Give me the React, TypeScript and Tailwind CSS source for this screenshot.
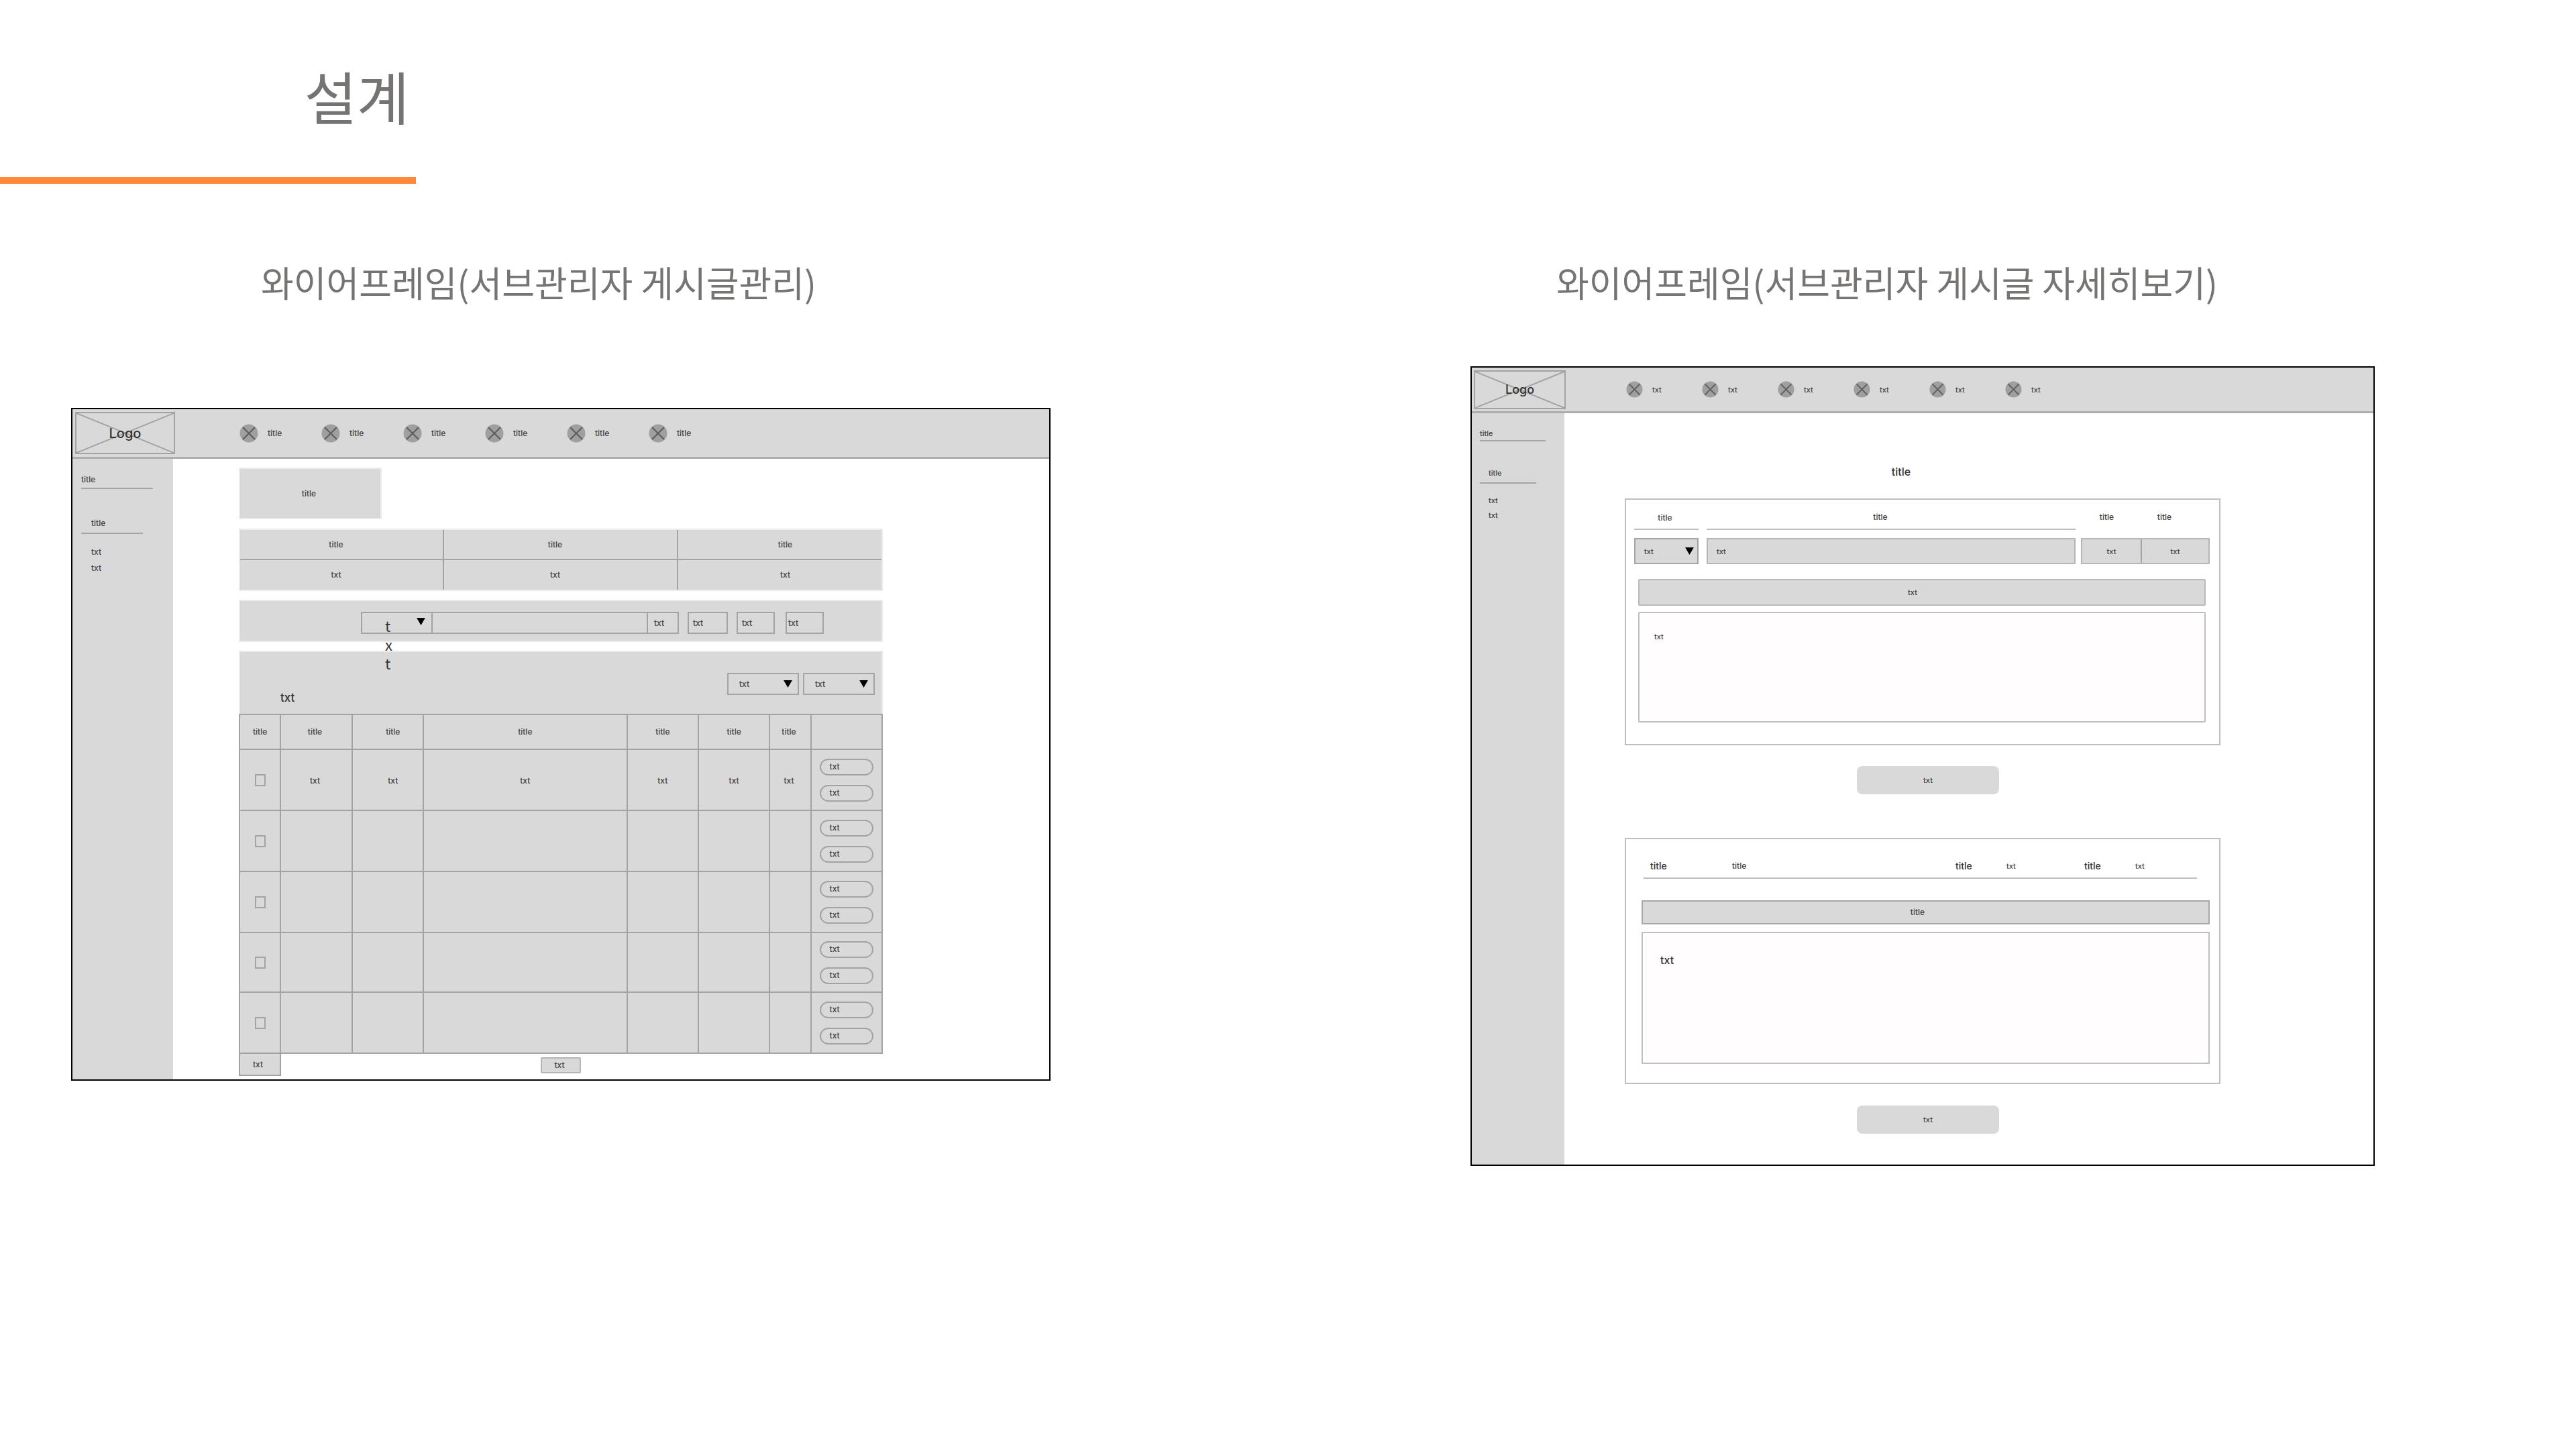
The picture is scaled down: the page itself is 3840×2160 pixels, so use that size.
import type { ReactNode } from "react";

const korean = "font-['Noto_Sans_CJK_KR','Noto_Sans',sans-serif]";

function Triangle({ className }: { className: string }) {
  return (
    <svg viewBox="0 0 14 12" aria-hidden="true" className={`pointer-events-none absolute h-[11px] w-[13px] fill-black ${className}`}>
      <path d="M0 0H14L7 12Z" />
    </svg>
  );
}

function CrossedCircle({ className }: { className: string }) {
  return (
    <svg viewBox="0 0 28 28" aria-hidden="true" className={className}>
      <circle cx="14" cy="14" r="13.5" fill="#9f9f9f" />
      <path d="M5 5L23 23M23 5L5 23" stroke="#5c5c5c" strokeWidth="2" />
    </svg>
  );
}

function Logo({ className }: { className: string }) {
  return (
    <div className={`relative flex shrink-0 items-center justify-center border-2 border-[#a3a3a3] font-medium text-[#333] ${className}`}>
      <svg viewBox="0 0 100 100" preserveAspectRatio="none" aria-hidden="true" className="absolute inset-0 h-full w-full">
        <path d="M0 0L100 100M100 0L0 100" stroke="#a3a3a3" strokeWidth="2" vectorEffect="non-scaling-stroke" />
      </svg>
      <span className="relative">Logo</span>
    </div>
  );
}

function DropDown({ label, className, arrow }: { label: string; className: string; arrow: string }) {
  return (
    <div className="relative flex">
      <select aria-label={label} className={`appearance-none rounded-none border-2 border-[#a3a3a3] bg-[#d9d9d9] ${className}`}>
        <option>txt</option>
      </select>
      <Triangle className={arrow} />
    </div>
  );
}

function SideLinks({ first, second, list }: { first: string; second: string; list: string }) {
  return (
    <>
      <a href="#" className={`block border-b-2 border-[#a3a3a3] ${first}`}>title</a>
      <a href="#" className={`block border-b-2 border-[#a3a3a3] ${second}`}>title</a>
      <ul className={`flex flex-col ${list}`}>
        <li><a href="#">txt</a></li>
        <li><a href="#">txt</a></li>
      </ul>
    </>
  );
}

const box = "border-2 border-[#ebebeb] bg-[#d9d9d9]";
const line = "border-[#a3a3a3]";
const searchButton = `h-[33px] border-2 text-left ${line}`;

const rows = ["h-[91px]", "h-[91px]", "h-[91px]", "h-[89px]", "h-[91px]"];
const columns = [
  { width: "w-[6.4%]", pad: "" },
  { width: "w-[11.1%]", pad: "pr-1" },
  { width: "w-[11.1%]", pad: "pl-4" },
  { width: "w-[31.7%]", pad: "" },
  { width: "w-[11.1%]", pad: "" },
  { width: "w-[11.1%]", pad: "" },
  { width: "w-[6.4%]", pad: "pr-1" },
  { width: "w-[11.1%]", pad: "" },
];

function PostListFrame() {
  return (
    <div className="border-2 border-black bg-white text-[12px] leading-5 font-medium text-[#444]">
      <header className="flex h-[74px] items-center border-b-3 border-[#adadad] bg-[#d9d9d9]">
        <Logo className="ml-1 h-[63px] w-[149px] text-xl" />
        <nav className="ml-24 flex">
          {["a", "b", "c", "d", "e", "f"].map((key) => (
            <a key={key} href="#" className="flex w-[122px] items-center gap-3.5">
              <CrossedCircle className="h-7 w-7" />
              title
            </a>
          ))}
        </nav>
      </header>
      <div className="flex">
        <aside className="w-[150px] shrink-0 bg-[#d9d9d9] pt-[21px] pl-[13px]">
          <SideLinks first="w-[107px] pb-0.5" second="mt-[41px] w-[92px] pb-1 pl-[15px]" list="mt-[17px] gap-1 pl-[15px]" />
        </aside>
        <main className="grid min-w-0 flex-1 grid-cols-[98fr_minmax(0,960fr)_248fr] pt-[13px] pb-[5px]">
          <div className="col-start-2">
            <h3 className={`flex h-[77px] w-[213px] items-center justify-center pr-1 ${box}`}>title</h3>

            <table className={`mt-3.5 w-full table-fixed border-separate border-spacing-0 text-center ${box}`}>
              <thead>
                <tr className="h-[45px]">
                  <th className={`w-[31.8%] border-r-2 border-b-2 p-0 pr-4 font-medium ${line}`}>title</th>
                  <th className={`w-[36.5%] border-r-2 border-b-2 p-0 pr-4 font-medium ${line}`}>title</th>
                  <th className={`border-b-2 p-0 pl-4 font-medium ${line}`}>title</th>
                </tr>
              </thead>
              <tbody>
                <tr className="h-11">
                  <td className={`border-r-2 p-0 pr-4 ${line}`}>txt</td>
                  <td className={`border-r-2 p-0 pr-4 ${line}`}>txt</td>
                  <td className="p-0 pl-4">txt</td>
                </tr>
              </tbody>
            </table>

            <form className={`mt-[13px] flex h-[63px] pt-4 pr-[86px] pl-[180px] ${box}`}>
              <div className="relative z-10 flex">
                <select aria-label="Search field" className={`h-[33px] w-[107px] appearance-none rounded-none border-2 text-transparent ${line}`}>
                  <option>txt</option>
                </select>
                <Triangle className="top-[9px] right-[11px]" />
                <span className="pointer-events-none absolute top-1.5 left-9 w-3 text-[22px] leading-7 font-normal break-all text-[#333] font-['Noto_Sans_CJK_KR','Noto_Sans',sans-serif]">
                  txt
                </span>
              </div>
              <input aria-label="Search" className={`h-[33px] min-w-0 flex-1 border-y-2 px-2 ${line}`} />
              <button type="button" className={`w-12 pl-[9px] ${searchButton}`}>txt</button>
              <button type="button" className={`ml-[13px] w-[60px] pl-1.5 ${searchButton}`}>txt</button>
              <button type="button" className={`ml-[13px] w-[57px] pl-1.5 ${searchButton}`}>txt</button>
              <button type="button" className={`ml-4 w-[57px] pl-0.5 ${searchButton}`}>txt</button>
            </form>

            <div className="mt-[13px] flex h-[94px] justify-between border-2 border-b-0 border-[#ebebeb] bg-[#d9d9d9] pr-2.5 pl-[60px]">
              <span className="mt-[56px] text-[17px] leading-6 text-[#333]">txt</span>
              <div className="mt-[31px] flex gap-1.5">
                <DropDown label="Sort order" className="h-[33px] w-[107px] pl-4" arrow="top-[11px] right-2.5" />
                <DropDown label="Rows per page" className="h-[33px] w-[107px] pl-4" arrow="top-[11px] right-2.5" />
              </div>
            </div>

            <table className={`w-full table-fixed border-separate border-spacing-0 border-t-2 border-l-2 bg-[#d9d9d9] text-center ${line}`}>
              <thead>
                <tr className="h-[52px]">
                  {columns.map((column, i) => (
                    <th key={i} className={`border-r-2 border-b-2 p-0 font-medium ${line} ${column.width} ${column.pad}`}>
                      {i < 7 ? "title" : ""}
                    </th>
                  ))}
                </tr>
              </thead>
              <tbody>
                {rows.map((height, r) => (
                  <tr key={r} className={height}>
                    {columns.map((column, i) => (
                      <td key={i} className={`border-r-2 border-b-2 p-0 ${line} ${column.pad}`}>
                        {i === 0 && (
                          <input type="checkbox" aria-label={`Select row ${r + 1}`} className={`mx-auto block h-[18px] w-4 appearance-none border-2 ${line}`} />
                        )}
                        {r === 0 && i > 0 && i < 7 && <span className="block pt-0.5">txt</span>}
                        {i === 7 && (
                          <div className="flex flex-col gap-3.5 px-3">
                            <button type="button" className={`h-[25px] rounded-full border-2 pl-[13px] text-left leading-none ${line}`}>txt</button>
                            <button type="button" className={`h-[25px] rounded-full border-2 pl-[13px] text-left leading-none ${line}`}>txt</button>
                          </div>
                        )}
                      </td>
                    ))}
                  </tr>
                ))}
              </tbody>
            </table>

            <div className="grid grid-cols-[1fr_auto_1fr] items-center">
              <button type="button" className={`h-[33px] w-[63px] border-2 border-t-0 bg-[#d9d9d9] pr-1.5 ${line}`}>txt</button>
              <button type="button" className="h-6 w-[60px] rounded-xs border-2 border-[#b5b5b5] bg-[#d9d9d9] pr-1 leading-none">txt</button>
            </div>
          </div>
        </main>
      </div>
    </div>
  );
}

const cardLine = "border-[#bfbfbf]";

function Card({ children, className }: { children: ReactNode; className: string }) {
  return <section className={`border-2 ${cardLine} ${className}`}>{children}</section>;
}

function WideButton({ className }: { className: string }) {
  return (
    <div className={`flex justify-center pl-4 ${className}`}>
      <button type="button" className="h-[42px] w-[212px] rounded-lg bg-[#d9d9d9]">txt</button>
    </div>
  );
}

function PostDetailFrame() {
  return (
    <div className="border-2 border-black bg-white text-[11px] leading-5 font-medium text-[#444]">
      <header className="flex h-[68px] items-center border-b-3 border-[#adadad] bg-[#d9d9d9]">
        <Logo className="ml-[3px] h-[58px] w-[137px] text-lg" />
        <nav className="ml-[90px] flex">
          {["a", "b", "c", "d", "e", "f"].map((key) => (
            <a key={key} href="#" className="flex w-[113px] items-center gap-3.5">
              <CrossedCircle className="h-[25px] w-[25px]" />
              txt
            </a>
          ))}
        </nav>
      </header>
      <div className="flex">
        <aside className="w-[138px] shrink-0 bg-[#d9d9d9] pt-5 pl-3">
          <SideLinks first="w-[98px]" second="mt-[37px] w-[84px] pb-1 pl-[13px]" list="mt-[15px] gap-0.5 pl-[13px]" />
        </aside>
        <main className="grid min-w-0 flex-1 grid-cols-[90fr_minmax(0,888fr)_228fr] pt-[75px] pb-[46px]">
          <div className="col-start-2">
            <h3 className="pr-16 text-center text-base leading-6 text-[#333]">title</h3>

            <Card className="mt-7 pb-8">
              <div className="grid grid-cols-[96px_minmax(0,1fr)_200px] pr-3.5 pl-3">
                <div className={`border-b-2 pt-[17px] pr-1 pb-1.5 text-center text-[12px] ${cardLine}`}>title</div>
                <div className={`ml-3 border-b-2 pt-4 pr-8 pb-1.5 text-center text-[12px] ${cardLine}`}>title</div>
                <div className="ml-2 grid grid-cols-[89px_1fr] pt-4 text-center text-[12px]">
                  <span className="pr-3">title</span>
                  <span className="pr-8">title</span>
                </div>
              </div>
              <div className="mt-3 grid grid-cols-[96px_minmax(0,1fr)_200px] pr-3.5 pl-3">
                <DropDown label="Category" className="h-[39px] w-24 pl-[13px]" arrow="top-[14px] right-[7px]" />
                <input aria-label="Subject" defaultValue="txt" className="ml-3 h-[39px] min-w-0 border-2 border-[#b5b5b5] bg-[#d9d9d9] pl-[13px]" />
                <div className="ml-2 grid h-[39px] grid-cols-[89px_1fr] items-center border-2 border-[#b5b5b5] bg-[#d9d9d9] text-center">
                  <span className={`flex h-full items-center justify-center border-r-2 ${line}`}>txt</span>
                  <span>txt</span>
                </div>
              </div>
              <div className="mt-[22px] mr-5 ml-[18px] flex flex-col gap-[9px]">
                <button type="button" className="h-10 rounded-xs border-2 border-[#bababa] bg-[#d9d9d9] pr-7">txt</button>
                <textarea aria-label="Body" defaultValue="txt" className={`block h-[165px] resize-none rounded-xs border-2 bg-[#fffdfd] px-[22px] py-[25px] ${cardLine}`} />
              </div>
            </Card>
            <WideButton className="mt-[31px]" />

            <Card className="mt-[65px] pb-7">
              <div className={`mr-[33px] ml-[26px] grid grid-cols-[122fr_333fr_76fr_116fr_76fr_92fr] border-b-2 pt-[30px] pb-[7px] pl-2.5 ${cardLine}`}>
                <span className="text-sm leading-5 text-[#333]">title</span>
                <span className="text-[12px]">title</span>
                <span className="text-sm leading-5 text-[#333]">title</span>
                <span>txt</span>
                <span className="text-sm leading-5 text-[#333]">title</span>
                <span>txt</span>
              </div>
              <div className="mt-8 mr-3.5 ml-[23px] flex flex-col gap-[11px]">
                <button type="button" className="h-9 border-2 border-[#a8a8a8] bg-[#d9d9d9] pr-6 text-[12px]">title</button>
                <textarea aria-label="Reply" defaultValue="txt" className={`block h-[197px] resize-none border-2 bg-[#fffdfd] px-[26px] py-7 text-base text-[#333] ${cardLine}`} />
              </div>
            </Card>
            <WideButton className="mt-8" />
          </div>
        </main>
      </div>
    </div>
  );
}

export default function App() {
  return (
    <div className="min-h-screen bg-white font-[Inter,'Liberation_Sans',sans-serif]">
      <div className="w-[16.15%] border-b-10 border-[#ff8939] pt-[82px] pb-[62px]">
        <h1 className={`pr-2.5 text-right text-[85px] leading-[120px] whitespace-nowrap text-[#757472] ${korean}`}>설계</h1>
      </div>
      <div className="grid grid-cols-[106fr_minmax(0,1460fr)_626fr_minmax(0,1348fr)_300fr] items-start pt-[106px]">
        <section className="col-start-2">
          <h2 className={`pr-[66px] text-center text-[53px] leading-20 text-[#757472] ${korean}`}>와이어프레임(서브관리자 게시글관리)</h2>
          <div className="mt-[148px]">
            <PostListFrame />
          </div>
        </section>
        <section className="col-start-4">
          <h2 className={`pr-[106px] text-center text-[53px] leading-20 text-[#757472] ${korean}`}>와이어프레임(서브관리자 게시글 자세히보기)</h2>
          <div className="mt-[86px]">
            <PostDetailFrame />
          </div>
        </section>
      </div>
    </div>
  );
}
